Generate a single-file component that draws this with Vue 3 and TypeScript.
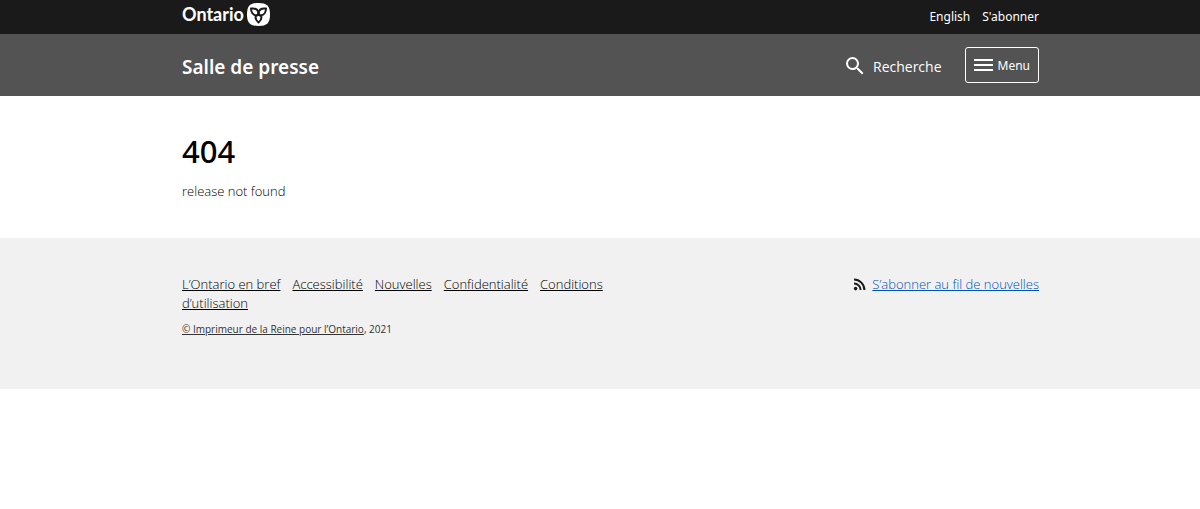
<script setup lang="ts">
interface FooterLink {
  label: string
  href: string
}

const footerLinks: FooterLink[] = [
  { label: 'L’Ontario en bref', href: '#bref' },
  { label: 'Accessibilité', href: '#accessibilite' },
  { label: 'Nouvelles', href: '#nouvelles' },
  { label: 'Confidentialité', href: '#confidentialite' },
  { label: 'Conditions d’utilisation', href: '#conditions' },
]
</script>

<template>
  <div class="page">
    <header>
      <div class="topbar">
        <div class="container topbar-inner">
          <a class="logo" href="#ontario" aria-label="Ontario">
            <span class="wordmark">Ontario</span>
            <svg width="23" height="23" viewBox="0 0 46 46" aria-hidden="true">
              <path fill="#fff" d="M23 0C40 0 46 6 46 23S40 46 23 46 0 40 0 23 6 0 23 0Z" />
              <g fill="none" stroke="#1a1a1a" stroke-width="4" stroke-linejoin="round">
                <path d="M23 20C22 13 16 10 8 11C8 18 12 24 18 25C21 25 23 23 23 20Z" />
                <path d="M23 20C24 13 30 10 38 11C38 18 34 24 28 25C25 25 23 23 23 20Z" />
                <path d="M18 25C16 30 18 35 23 39C28 35 30 30 28 25C25 25 23 23 23 20C23 23 21 25 18 25Z" />
              </g>
            </svg>
          </a>
          <nav class="topnav" aria-label="Langue et abonnement">
            <a href="#english">English</a>
            <a href="#abonner">S'abonner</a>
          </nav>
        </div>
      </div>
      <div class="appbar">
        <div class="container appbar-inner">
          <a class="title" href="#salle">Salle de presse</a>
          <div class="actions">
            <button class="search" type="button">
              <svg width="24" height="24" viewBox="0 0 24 24" aria-hidden="true">
                <path fill="#fff" d="M15.5 14h-.79l-.28-.27A6.471 6.471 0 0 0 16 9.5 6.5 6.5 0 1 0 9.5 16c1.61 0 3.09-.59 4.23-1.57l.27.28v.79l5 4.99L20.49 19l-4.99-5zm-6 0C7.01 14 5 11.99 5 9.5S7.01 5 9.5 5 14 7.01 14 9.5 11.99 14 9.5 14z" />
              </svg>
              Recherche
            </button>
            <button class="menu" type="button">
              <svg width="19" height="12" viewBox="0 0 19 12" aria-hidden="true">
                <path fill="#fff" d="M0 0h19v2H0zM0 5h19v2H0zM0 10h19v2H0z" />
              </svg>
              Menu
            </button>
          </div>
        </div>
      </div>
    </header>
    <main class="container content">
      <h1>404</h1>
      <p>release not found</p>
    </main>
    <footer>
      <div class="container footer-inner">
        <div class="footer-main">
          <nav class="footer-links" aria-label="Pied de page">
            <template v-for="link in footerLinks" :key="link.href">
              <a :href="link.href">{{ link.label }}</a><wbr>
            </template>
          </nav>
          <p class="copyright"><a href="#imprimeur">© Imprimeur de la Reine pour l’Ontario</a>, 2021</p>
        </div>
        <a class="feed" href="#fil">
          <svg width="13" height="13" viewBox="0 0 13 13" aria-hidden="true">
            <circle cx="2.6" cy="10.6" r="1.8" fill="#1a1a1a" />
            <path d="M1 5.4A6.6 6.6 0 0 1 7.6 12M1 1.6A10.4 10.4 0 0 1 11.4 12" fill="none" stroke="#1a1a1a" stroke-width="2" />
          </svg>
          <span>S’abonner au fil de nouvelles</span>
        </a>
      </div>
    </footer>
  </div>
</template>

<style>
body {
  margin: 0;
  background: #fff;
}
</style>

<style scoped>
.page {
  font-family: 'Open Sans', 'Noto Sans', sans-serif;
  font-size: 13px;
  font-weight: 300;
  line-height: 19px;
  color: #000;
}

.container {
  box-sizing: border-box;
  max-width: 890px;
  margin: 0 auto;
  padding: 0 6px 0 27px;
}

.topbar {
  background: #1a1a1a;
  height: 34px;
}

.topbar-inner,
.appbar-inner {
  display: flex;
  align-items: center;
  justify-content: space-between;
  height: 100%;
}

.logo {
  display: flex;
  align-items: center;
  gap: 3px;
  color: #fff;
  text-decoration: none;
  padding-bottom: 6px;
}

.wordmark {
  font-family: Lato, sans-serif;
  font-size: 18px;
  font-weight: 700;
}

.topnav {
  display: flex;
  gap: 12px;
  padding-bottom: 2px;
  font-family: 'Noto Sans', sans-serif;
  font-size: 12px;
  font-weight: 400;
}

.topnav a {
  color: #fff;
  text-decoration: none;
}

.appbar {
  background: #535353;
  height: 62px;
}

.title {
  color: #fff;
  font-family: 'Noto Sans', sans-serif;
  font-size: 19px;
  font-weight: 600;
  padding-top: 4px;
  text-decoration: none;
}

.actions {
  display: flex;
  align-items: center;
  gap: 23px;
}

button {
  display: flex;
  align-items: center;
  font-family: inherit;
  color: #fff;
  background: none;
  border: 0;
  padding: 0;
  cursor: pointer;
}

.search {
  gap: 6px;
  padding-top: 2px;
  font-size: 14px;
}

.menu {
  gap: 5px;
  height: 36px;
  padding: 0 8px;
  font-family: 'Noto Sans', sans-serif;
  font-size: 12px;
  border: 1px solid #fff;
  border-radius: 3px;
}

.content {
  padding-top: 35px;
  padding-bottom: 37px;
}

h1 {
  margin: 0 0 11px;
  font-family: 'Noto Sans', sans-serif;
  font-size: 31px;
  line-height: 40px;
  font-weight: 500;
}

p {
  margin: 0;
}

footer {
  background: #f1f1f1;
}

.footer-inner {
  display: flex;
  justify-content: space-between;
  padding-top: 37px;
  padding-bottom: 50px;
}

.footer-main {
  flex: 0 1 430px;
}

.footer-links a {
  color: inherit;
  margin-right: 12px;
}

.copyright {
  margin-top: 7px;
  font-size: 10px;
  font-weight: 400;
  color: #333;
}

.copyright a {
  color: inherit;
}

.feed {
  display: flex;
  align-items: center;
  align-self: flex-start;
  gap: 6px;
  color: #0052b8;
  text-decoration: none;
}

.feed span {
  text-decoration: underline;
}
</style>
